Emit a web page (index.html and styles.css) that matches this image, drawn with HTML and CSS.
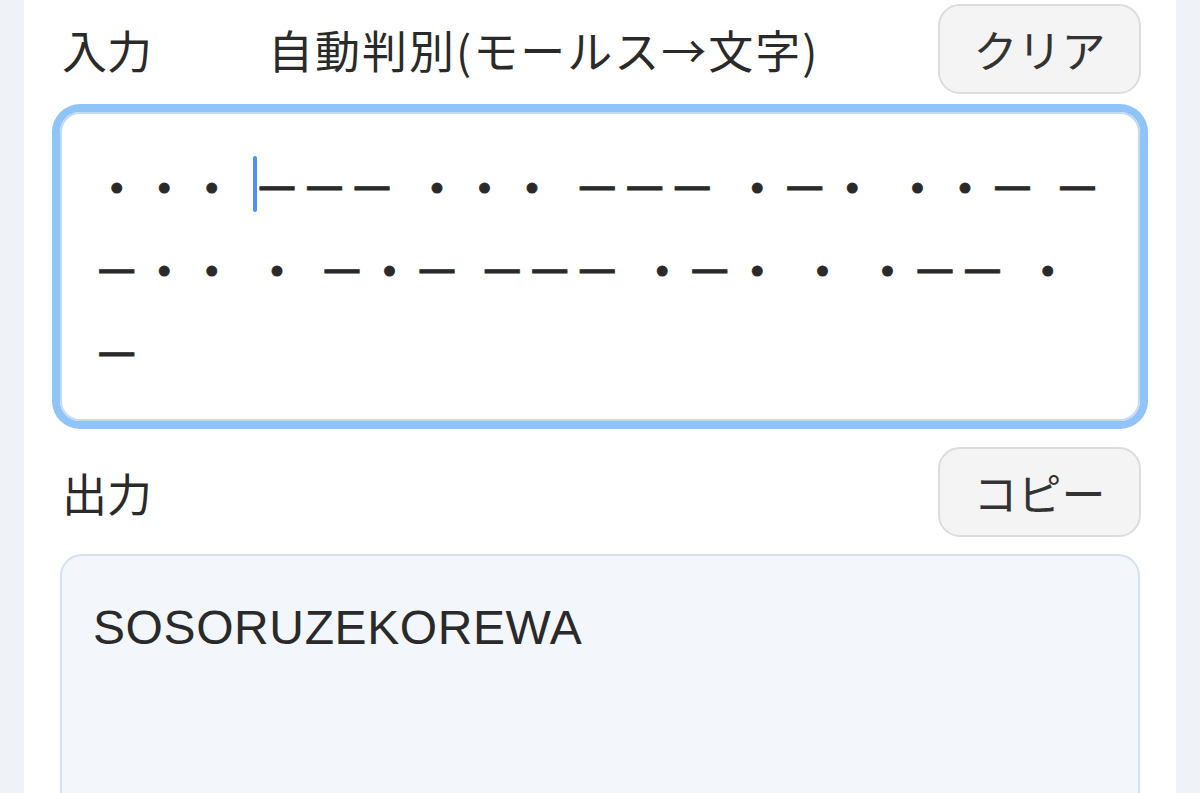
FILE: index.html
```html
<!DOCTYPE html>
<html lang="ja">
  <head>
    <meta charset="UTF-8" />
    <meta name="viewport" content="width=device-width, initial-scale=1.0" />
    <title>モールス変換</title>
    <link rel="stylesheet" href="styles.css">
  </head>
  <body>
    <div class="card">
      <div class="row">
        <span class="label">入力</span>
        <span class="mode">自動判別(モールス→文字)</span>
        <button class="btn">クリア</button>
      </div>

      <div class="input-box">
        <div class="line">・・・ <span class="caret"></span>－－－ ・・・ －－－ ・－・ ・・－ －</div>
        <div class="line">－・・ ・ －・－ －－－ ・－・ ・ ・－－ ・</div>
        <div class="line">－</div>
      </div>

      <div class="row row-out">
        <span class="label">出力</span>
        <button class="btn">コピー</button>
      </div>

      <div class="output-box">SOSORUZEKOREWA</div>
    </div>
  </body>
</html>
```

FILE: styles.css
```css
body {
  margin: 0;
  background-color: #eff3f8;
  font-family: "Liberation Sans", "Noto Sans CJK JP", sans-serif;
  color: #2a2a2a;
  height: 793px;
  overflow: hidden;
}

.card {
  margin: 0 24px;
  background-color: #fff;
  padding: 4px 36px 0;
  height: 100%;
}

.row {
  display: flex;
  align-items: center;
  margin-bottom: 18px;
}

.row-out {
  margin-top: 26px;
  margin-bottom: 17px;
}

.label {
  font-family: "Noto Sans CJK JP", sans-serif;
  font-size: 45px;
  padding-left: 2px;
}

.mode {
  font-family: "Noto Sans CJK JP", sans-serif;
  font-size: 45px;
  letter-spacing: 2px;
  margin-left: 116px;
}

.btn {
  margin-left: auto;
  height: 90px;
  width: 203px;
  margin-right: -1px;
  background-color: #f4f4f4;
  border: 2px solid #dcdcdc;
  border-radius: 22px;
  font-family: "Noto Sans CJK JP", sans-serif;
  font-size: 44px;
  color: #333;
  padding: 0;
}

.input-box {
  box-sizing: border-box;
  height: 309px;
  border: 2px solid #c3daf3;
  border-radius: 20px;
  box-shadow: 0 0 0 8px #90c4f8;
  padding: 30px 31px;
  font-family: "Noto Sans CJK JP", sans-serif;
  font-size: 47.5px;
  line-height: 83px;
  color: #2a2a2a;
}

.line {
  white-space: pre;
  word-spacing: 7px;
  -webkit-text-stroke: 0.8px #2a2a2a;
}

.caret {
  display: inline-block;
  width: 4px;
  height: 56px;
  margin-right: -4px;
  vertical-align: -6px;
  background-color: #4f8ef5;
  border-radius: 2px;
}

.output-box {
  box-sizing: border-box;
  height: 300px;
  background-color: #f3f7fc;
  border: 2px solid #d4e1f1;
  border-radius: 22px;
  padding: 30px 31px;
  font-size: 48px;
  letter-spacing: 0.6px;
  line-height: 83px;
  color: #2a2a2a;
}
```
